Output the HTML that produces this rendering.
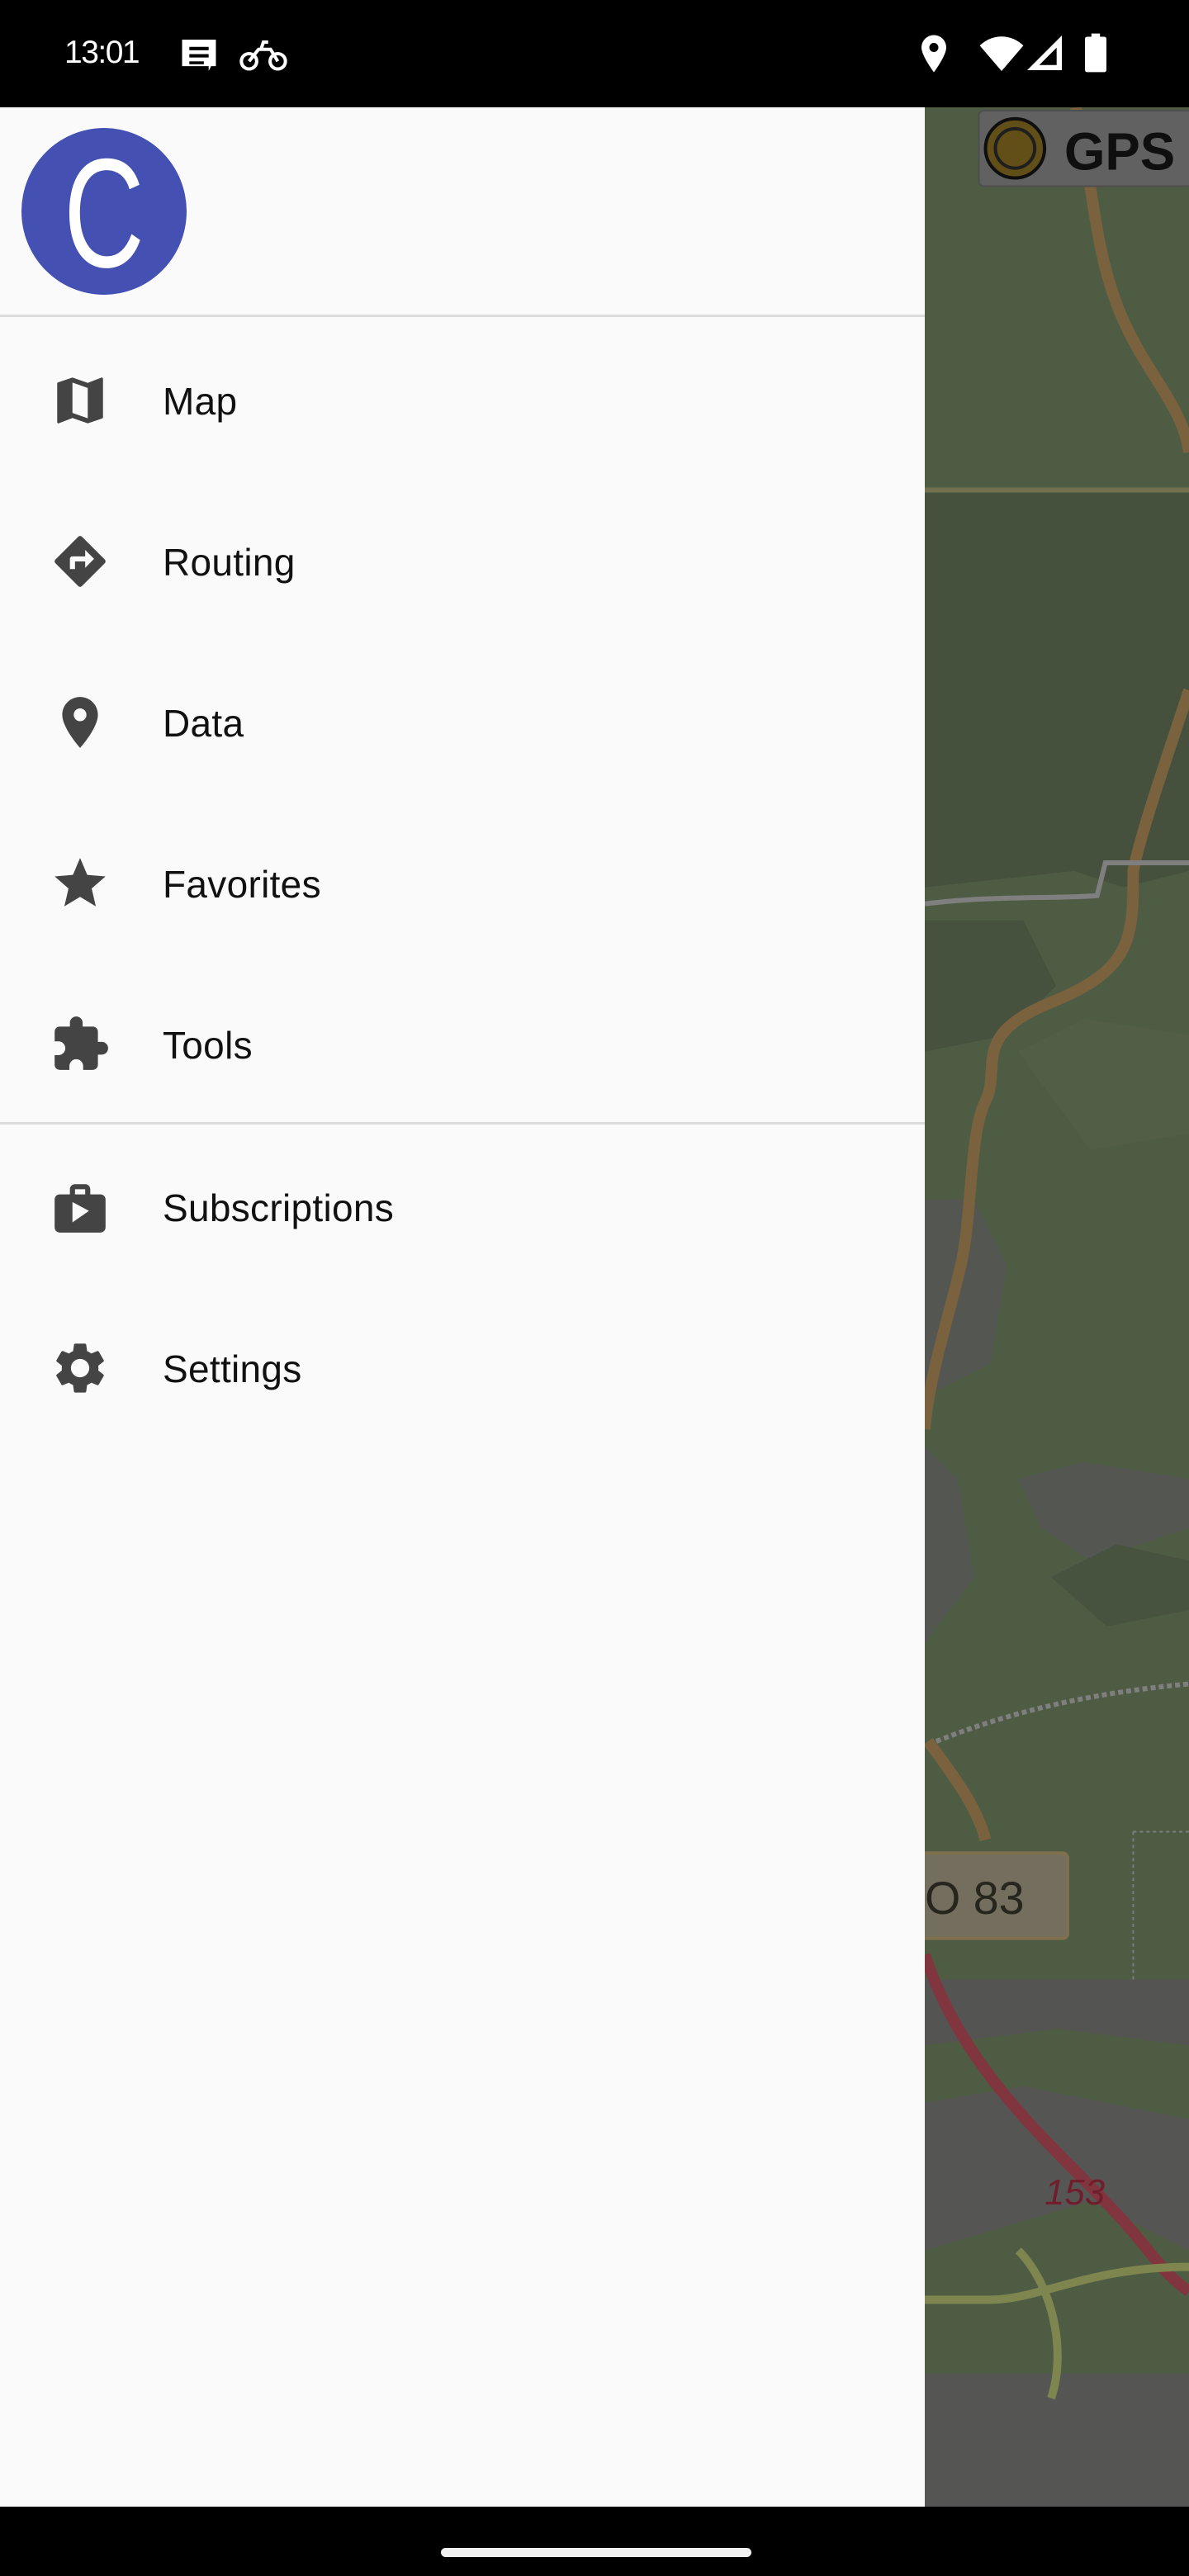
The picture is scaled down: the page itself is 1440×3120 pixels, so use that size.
<!DOCTYPE html>
<html><head><meta charset="utf-8">
<style>
*{margin:0;padding:0;box-sizing:border-box}
html,body{width:1440px;height:3120px;overflow:hidden;background:#000;font-family:"Liberation Sans",Roboto,sans-serif}
#status{position:absolute;left:0;top:0;width:1440px;height:130px;background:#000;color:#fff}
#time{position:absolute;left:78px;top:42px;font-size:39px;letter-spacing:-1.5px}
#drawer{position:absolute;left:0;top:130px;width:1120px;height:2906px;background:#fafafa}
#map{position:absolute;left:1120px;top:130px;width:320px;height:2906px;overflow:hidden}
.div{position:absolute;left:0;width:1120px;height:3px;background:#dcdcdc}
.item{position:absolute;left:0;width:1120px;height:100px}
.item svg{position:absolute;left:60px;top:13px;width:74px;height:74px}
.item span{position:absolute;left:197px;top:24px;font-size:46px;letter-spacing:0.3px;color:#111}
#nav{position:absolute;left:0;top:3036px;width:1440px;height:84px;background:#000}
#pill{position:absolute;left:534px;top:50px;width:376px;height:11px;border-radius:6px;background:#f0f0f0}
</style></head><body>
<div id="status">
 <div id="time">13:01</div>
 <svg style="position:absolute;left:220px;top:48px" width="42" height="38" viewBox="0 0 14 13"><path d="M0 0h14v11h-2l-1 2v-2H0z" fill="#fff"/><rect x="3" y="3" width="8" height="1.4" fill="#000"/><rect x="3" y="6" width="8" height="1.4" fill="#000"/><rect x="3" y="9" width="6" height="1.2" fill="#000"/></svg>
 <svg style="position:absolute;left:290px;top:48px" width="58" height="38" viewBox="0 0 20 13" fill="none" stroke="#fff" stroke-width="1.4"><circle cx="4" cy="9" r="3.2"/><circle cx="16" cy="9" r="3.2"/><path d="M4 9l4-5h5l3 5M9 4l1-3h2"/></svg>
 <svg style="position:absolute;left:1116px;top:42px" width="30" height="46" viewBox="0 0 12 18"><path d="M6 0a6 6 0 0 1 6 6c0 4-6 12-6 12S0 10 0 6a6 6 0 0 1 6-6z" fill="#fff"/><circle cx="6" cy="6" r="2.2" fill="#000"/></svg>
 <svg style="position:absolute;left:1186px;top:42px" width="54" height="44" viewBox="0 0 24 20"><path d="M12 20L0 6a17 17 0 0 1 24 0z" fill="#fff"/></svg>
 <svg style="position:absolute;left:1244px;top:42px" width="42" height="44" viewBox="0 0 20 20"><path d="M20 0v20H0z" fill="#fff"/><path d="M17 7v10H7z" fill="#000"/></svg>
 <svg style="position:absolute;left:1314px;top:40px" width="26" height="48" viewBox="0 0 10 18"><rect x="3" y="0" width="4" height="2" fill="#fff"/><rect x="0" y="1.5" width="10" height="16.5" rx="1" fill="#fff"/></svg>
</div>

<div id="drawer">
 <svg style="position:absolute;left:26px;top:25px" width="200" height="202" viewBox="0 0 200 202"><ellipse cx="100" cy="101" rx="100" ry="101" fill="#4551b2"/><text x="100" y="168" text-anchor="middle" font-family="Liberation Sans,sans-serif" font-size="188" fill="#fff" transform="translate(100 0) scale(0.72 1) translate(-100 0)">C</text></svg>
 <div class="div" style="top:251px"></div>

 <div class="item" style="top:305px"><svg viewBox="0 0 24 24"><path fill="#444" d="M20.5 3l-.16.03L15 5.1 9 3 3.36 4.9c-.21.07-.36.25-.36.48V20.5c0 .28.22.5.5.5l.16-.03L9 18.9l6 2.1 5.64-1.9c.21-.07.36-.25.36-.48V3.5c0-.28-.22-.5-.5-.5zM15 19l-6-2.11V5l6 2.11V19z"/></svg><span>Map</span></div>
 <div class="item" style="top:500px"><svg viewBox="0 0 24 24"><path fill="#444" d="M21.71 11.29l-9-9a.996.996 0 0 0-1.41 0l-9 9a.996.996 0 0 0 0 1.41l9 9c.39.39 1.02.39 1.41 0l9-9a.996.996 0 0 0 0-1.41zM14 14.5V12h-4v3H8v-4c0-.55.45-1 1-1h5V7.5l3.5 3.5-3.5 3.5z"/></svg><span>Routing</span></div>
 <div class="item" style="top:695px"><svg viewBox="0 0 24 24"><path fill="#444" d="M12 2C8.13 2 5 5.13 5 9c0 5.25 7 13 7 13s7-7.75 7-13c0-3.87-3.13-7-7-7zm0 9.5a2.5 2.5 0 0 1 0-5 2.5 2.5 0 0 1 0 5z"/></svg><span>Data</span></div>
 <div class="item" style="top:890px"><svg viewBox="0 0 24 24"><path fill="#444" d="M12 17.27L18.18 21l-1.64-7.03L22 9.24l-7.19-.61L12 2 9.19 8.63 2 9.24l5.46 4.73L5.82 21z"/></svg><span>Favorites</span></div>
 <div class="item" style="top:1085px"><svg viewBox="0 0 24 24"><path fill="#444" d="M20.5 11H19V7c0-1.1-.9-2-2-2h-4V3.5a2.5 2.5 0 0 0-5 0V5H4c-1.1 0-1.99.9-1.99 2v3.8H3.5c1.490 0 2.7 1.21 2.7 2.7s-1.21 2.7-2.7 2.7H2V20c0 1.1.9 2 2 2h3.8v-1.5c0-1.49 1.21-2.7 2.7-2.7 1.49 0 2.7 1.21 2.7 2.7V22H17c1.1 0 2-.9 2-2v-4h1.5a2.5 2.5 0 0 0 0-5z"/></svg><span>Tools</span></div>

 <div class="div" style="top:1229px"></div>

 <div class="item" style="top:1282px"><svg viewBox="0 0 24 24"><path fill="#444" d="M20 7h-4V5c0-.55-.22-1.05-.59-1.41C15.050 3.22 14.55 3 14 3h-4c-1.1 0-2 .9-2 2v2H4c-1.1 0-2 .9-2 2v11c0 1.1.9 2 2 2h16c1.1 0 2-.9 2-2V9c0-1.1-.9-2-2-2zM10 5h4v2h-4V5zm-1 13V10l6.5 3.5L9 18z"/></svg><span>Subscriptions</span></div>
 <div class="item" style="top:1477px"><svg viewBox="0 0 24 24"><path fill="#444" d="M19.14 12.94c.04-.3.06-.61.06-.94 0-.32-.02-.64-.07-.94l2.03-1.58a.49.49 0 0 0 .12-.61l-1.92-3.32a.488.488 0 0 0-.59-.22l-2.39.96c-.5-.38-1.03-.7-1.62-.94l-.36-2.540a.484.484 0 0 0-.48-.41h-3.84c-.24 0-.43.17-.47.41l-.36 2.54c-.59.24-1.13.57-1.62.94l-2.39-.96c-.22-.08-.47 0-.59.22L2.74 8.87c-.12.21-.08.47.12.61l2.03 1.58c-.05.3-.09.63-.09.94s.02.64.07.94l-2.03 1.58a.49.49 0 0 0-.12.61l1.92 3.32c.12.22.37.29.59.22l2.39-.96c.5.38 1.03.7 1.62.94l.36 2.54c.05.24.24.41.48.41h3.84c.24 0 .44-.17.47-.41l.36-2.54c.59-.24 1.13-.56 1.62-.94l2.39.96c.22.08.47 0 .59-.22l1.920-3.32c.12-.22.07-.47-.12-.61l-2.01-1.58zM12 15.6c-1.98 0-3.6-1.62-3.6-3.6s1.62-3.6 3.6-3.6 3.6 1.62 3.6 3.6-1.62 3.6-3.6 3.6z"/></svg><span>Settings</span></div>
</div>

<div id="map">
<svg width="320" height="2906" viewBox="563 65 161 1461" preserveAspectRatio="none">
 <rect x="563" y="65" width="161" height="1461" fill="#56644a"/>
 <path d="M563 300h161v230l-40 10 -30 -10 -91 10z" fill="#4b5843"/>
 <path d="M563 560h60l20 40 -30 30 -50 10z" fill="#4d5a44"/>
 <path d="M620 640l40 -20 64 10v60l-60 10z" fill="#5a684c"/>
 <path d="M563 730h30l20 40 -10 60 -40 20z" fill="#5c5e59"/>
 <path d="M620 900l40 -10 64 10v30l-60 20 -30 -20z" fill="#5c5e59"/>
 <path d="M563 880l20 20 10 60 -30 40z" fill="#5c5e59"/>
 <path d="M640 960l40 -20 44 10v30l-50 10z" fill="#4e5b45"/>
 <path d="M563 1205h161v40l-80 -10 -81 10z" fill="#5c5d59"/>
 <path d="M563 1280l60 -10 101 20v80l-60 -30 -101 30z" fill="#5d5e5b"/>
 <path d="M563 1445h161v81h-161z" fill="#5d5e5b"/>
 <path d="M655 65c10 40 10 80 25 120s40 60 44 90" stroke="#866b44" stroke-width="7" fill="none"/>
 <path d="M724 420c-20 60 -30 90 -34 110 0 40 0 60 -50 80s-30 40 -40 60c-10 20 -8 70 -15 100s-20 70 -22 100" stroke="#866b44" stroke-width="7" fill="none"/>
 <path d="M565 1060c15 20 30 40 35 60" stroke="#866b44" stroke-width="7" fill="none"/>
 <path d="M563 298h161" stroke="#7c7a55" stroke-width="3"/>
 <path d="M563 550c40 -5 80 -3 105 -5l5 -20h51" stroke="#8a8a8a" stroke-width="3" fill="none"/>
 <path d="M570 1060c50 -20 100 -30 154 -35" stroke="#8a8a8a" stroke-width="3" stroke-dasharray="3 2" fill="none"/>
 <path d="M563 1190c20 60 60 100 100 140s40 50 61 65" stroke="#8c3a45" stroke-width="7" fill="none"/>
 <path d="M563 1400h40c30 0 60 -20 121 -20M620 1370c20 20 30 60 20 90" stroke="#8a9155" stroke-width="5" fill="none"/>
 <rect x="560" y="1128" width="90" height="52" rx="3" fill="#7e7866" stroke="#8d7a55" stroke-width="2"/>
 <text x="563" y="1165" font-family="Liberation Sans,sans-serif" font-size="28" fill="#2a2a22">O 83</text>
 <text x="636" y="1342" font-family="Liberation Sans,sans-serif" font-style="italic" font-size="22" fill="#7a2030">153</text>
 <path d="M690 1115h34M690 1115v90" stroke="#888" stroke-width="1" stroke-dasharray="2 2"/>
 <rect x="596" y="67" width="130" height="46" rx="3" fill="#6a6a6a" stroke="#555" stroke-width="1"/>
 <ellipse cx="618" cy="90" rx="18" ry="18" fill="#6b551a" stroke="#111" stroke-width="2"/>
 <ellipse cx="618" cy="90" rx="12" ry="12" fill="none" stroke="#222" stroke-width="2"/>
 <text x="648" y="103" font-family="Liberation Sans,sans-serif" font-weight="bold" font-size="32" fill="#111">GPS</text>
</svg>
<div style="position:absolute;inset:0;background:rgba(0,0,0,0.08)"></div>
</div>

<div id="nav"><div id="pill"></div></div>
</body></html>
